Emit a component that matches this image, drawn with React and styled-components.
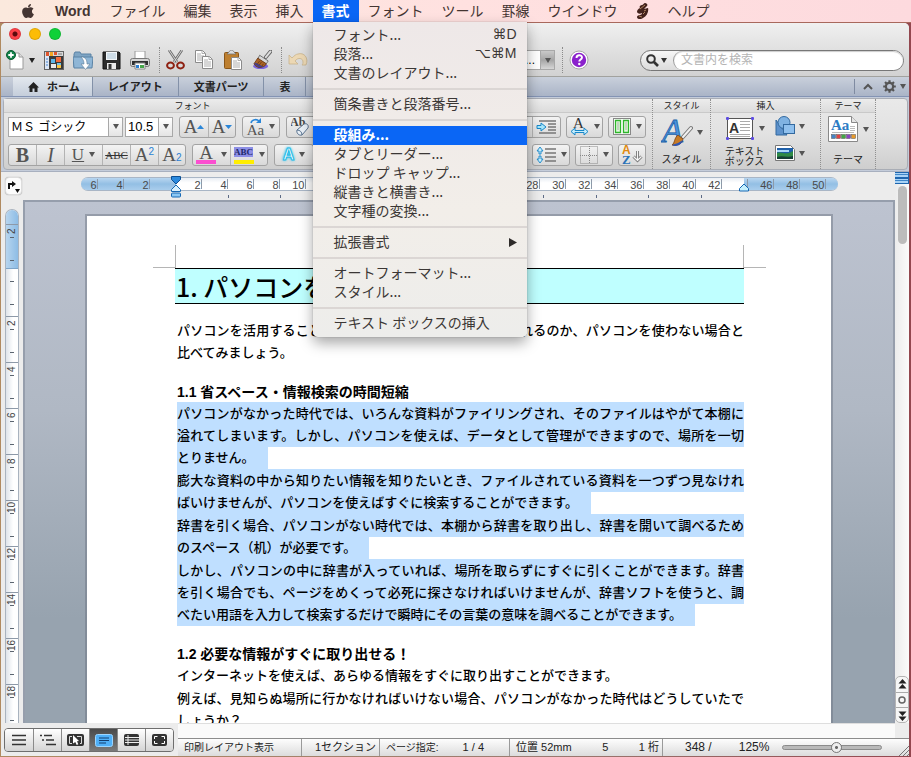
import { useState } from "react";
import styled, { createGlobalStyle, css } from "styled-components";
import { FaApple } from "react-icons/fa";

const GlobalStyle = createGlobalStyle`
  * {
    box-sizing: border-box;
  }
  body {
    margin: 0;
    font-family: "Liberation Sans", "Noto Sans CJK JP", sans-serif;
    color: #222;
  }
  button, select, input {
    font: inherit;
    color: inherit;
  }
  svg {
    display: block;
    flex: none;
  }
`;

const Desktop = styled.div`
  display: flex;
  flex-direction: column;
  height: 100vh;
  overflow: hidden;
  background: linear-gradient(90deg, #b08a60, #9a7a70 60%, #93474f);
`;

/* ---------- menu bar ---------- */
const MenuBar = styled.nav`
  display: flex;
  flex: none;
  height: 23px;
  padding-left: 11px;
  border-bottom: 1px solid #a8685c;
  background: linear-gradient(90deg, #fbe9dd, #ffe1e0 50%, #fddade);
  font-family: "Noto Sans CJK JP", sans-serif;
  font-size: 14px;
  line-height: 20px;
`;
const MenuSlot = styled.div`
  position: relative;
`;
const MenuTitle = styled.button`
  display: flex;
  align-items: ${(p) => (p.$icon ? "center" : "flex-start")};
  height: 22px;
  padding: 0 ${(p) => (p.$app ? 10 : 9)}px;
  border: none;
  white-space: nowrap;
  color: ${(p) => (p.$open ? "#fff" : "#443532")};
  background: ${(p) => (p.$open ? "#0a66f5" : "transparent")};
  font-weight: ${(p) => (p.$open || p.$app ? 700 : 400)};
  font-family: ${(p) => (p.$app ? '"Liberation Sans", sans-serif' : "inherit")};
  line-height: ${(p) => (p.$app ? 22 : 20)}px;
`;
const Dropdown = styled.div`
  position: absolute;
  z-index: 10;
  top: 22px;
  left: 0;
  width: 214px;
  padding: 4px 0;
  border-radius: 0 0 5px 5px;
  background: linear-gradient(#eee8e8, #f2eee9 60%, #ededeb);
  box-shadow: 0 6px 14px rgba(0, 0, 0, 0.35), 0 0 1px rgba(0, 0, 0, 0.5);
`;
const MenuItem = styled.button`
  display: flex;
  align-items: flex-start;
  justify-content: space-between;
  width: 100%;
  height: 19px;
  padding: 0 10px 0 21px;
  border: none;
  line-height: 17px;
  white-space: nowrap;
  color: ${(p) => (p.$active ? "#fff" : "#3b3735")};
  background: ${(p) => (p.$active ? "#0a66f5" : "transparent")};
  font-weight: ${(p) => (p.$active ? 700 : 400)};
`;
const Shortcut = styled.span`
  font-family: "Liberation Sans", "DejaVu Sans", sans-serif;
`;
const Divider = styled.hr`
  height: 2px;
  margin: 5px 0;
  border: none;
  background: #dbd6d4;
`;

/* ---------- window ---------- */
const Window = styled.div`
  display: flex;
  flex-direction: column;
  flex: 1;
  min-height: 0;
  margin: 0 2px 1px 1px;
  overflow: hidden;
  border-radius: 5px 5px 0 0;
  background: #ececec;
`;
const TitleBar = styled.header`
  flex: none;
  height: 54px;
  border-bottom: 1px solid #a2a29e;
  background: linear-gradient(#f0f0f0, #e2e2e2 45%, #d2d2d2);
`;
const Lights = styled.div`
  display: flex;
  gap: 8px;
  padding: 5px 8px 0;
`;
const Light = styled.button`
  width: 12px;
  height: 12px;
  padding: 0;
  border: 1px solid rgba(0, 0, 0, 0.12);
  border-radius: 50%;
  background: ${(p) => p.$color};
`;
const Toolbar = styled.div`
  display: flex;
  align-items: center;
  height: 36px;
  margin-top: 2px;
  padding: 0 5px 0 5px;
`;
const ToolButton = styled.button`
  display: flex;
  align-items: center;
  gap: ${(p) => (p.$gap ? "5px" : 0)};
  margin-right: 9px;
  padding: 0;
  border: none;
  background: none;
`;
const DottedLine = styled.span`
  align-self: center;
  height: 26px;
  margin-right: 6px;
  border-left: 1px dotted #8b8b8b;
`;
const ComboBox = styled.label`
  display: grid;
  width: ${(p) => p.$width}px;
  height: 20px;
  flex: none;
  select {
    grid-area: 1 / 1;
    min-width: 0;
    padding: 0 ${(p) => (p.$end ? 19 : 14)}px 0 2px;
    border: 1px solid #a8a8a8;
    border-radius: 0;
    appearance: none;
    background: #fff;
    color: #000;
    font-size: ${(p) => p.$size || 12}px;
    text-align-last: ${(p) => (p.$end ? "right" : "left")};
  }
  span {
    grid-area: 1 / 1;
    justify-self: end;
    display: flex;
    align-items: center;
    justify-content: center;
    width: 14px;
    margin: 1px;
    border-left: 1px solid #a8a8a8;
    background: ${(p) =>
      p.$end
        ? "linear-gradient(#c9c9c9, #a5a5a5 50%, #d6d6d6)"
        : "linear-gradient(#fff, #e4e4e4)"};
    pointer-events: none;
  }
`;
const SearchBox = styled.label`
  display: flex;
  align-items: center;
  flex: 0 1 264px;
  height: 21px;
  margin-left: auto;
  padding-left: 5px;
  border: 1px solid #777;
  border-radius: 11px;
  background: linear-gradient(#f6f6f6, #dcdcdc);
  gap: 2px;
  input {
    flex: 1;
    min-width: 0;
    height: 19px;
    margin-left: 4px;
    padding: 0 8px 0 7px;
    border: none;
    border-left: 1px solid #999;
    border-radius: 10px;
    outline: none;
    background: #fff;
    font-size: 12px;
    box-shadow: inset 0 1px 1px #ccc;
  }
  input::placeholder {
    color: #b4b4b4;
  }
`;

/* ---------- ribbon ---------- */
const TabBar = styled.div`
  display: flex;
  flex: none;
  height: 20px;
  padding-left: 12px;
  border-bottom: 1px solid #8494b4;
  background: linear-gradient(#c9d0db, #aab4c7);
`;
const Tab = styled.button`
  display: flex;
  align-items: center;
  justify-content: center;
  gap: 8px;
  padding: 1px ${(p) => (p.$active ? 12 : 15)}px 0 15px;
  border: none;
  border-right: 1px solid #8391a8;
  font-size: 11px;
  font-weight: 700;
  line-height: 18px;
  white-space: nowrap;
  background: ${(p) =>
    p.$active ? "linear-gradient(#e3e8ee, #c5cedb)" : "transparent"};
`;
const TabTools = styled.div`
  display: flex;
  align-items: center;
  gap: 6px;
  margin: 2px 1px 2px auto;
  padding-left: 6px;
  border-left: 1px solid #7f8ba1;
`;
const IconButton = styled.button`
  display: flex;
  align-items: center;
  gap: 4px;
  padding: 0 2px;
  border: none;
  background: none;
`;
const RibbonFrame = styled.section`
  flex: none;
  height: 75px;
  padding: 1px 1px 1px 2px;
  border-bottom: 1px solid #a8b0bf;
  background: #c4ccda;
`;
const Ribbon = styled.div`
  display: flex;
  height: 72px;
  border: 1px solid #a9adb5;
  border-radius: 4px;
  background: linear-gradient(#e9e9e9, #e2e2e2 50%, #cecece);
`;
const Group = styled.div`
  display: flex;
  flex-direction: column;
  flex: 0 0 ${(p) => p.$width}px;
  border-right: ${(p) => (p.$plain ? "none" : "1px dotted #8f8f8f")};
`;
const GroupTitle = styled.h3`
  flex: none;
  height: 14px;
  margin: 0;
  border-bottom: 1px solid #c9c9c9;
  background: linear-gradient(#ececec, #dcdcdc);
  font-size: 9px;
  font-weight: 400;
  line-height: 14px;
  text-align: center;
`;
const Rows = styled.div`
  display: flex;
  flex-direction: column;
  gap: 7px;
  padding: 3px 6px 0 4px;
`;
const Row = styled.div`
  display: flex;
  align-items: center;
  justify-content: ${(p) => (p.$end ? "flex-end" : "flex-start")};
  gap: ${(p) => (p.$end ? 5 : 6)}px;
  height: 21px;
`;
const ComboPair = styled.div`
  display: flex;
  gap: 2px;
`;
const ButtonSet = styled.div`
  display: flex;
  height: 22px;
  border: 1px solid #a3a3a3;
  border-radius: 3px;
  background: linear-gradient(#f3f3f3, #d9d9d9);
  > button + button {
    border-left: 1px solid #b3b3b3;
  }
`;
const RibbonButton = styled.button`
  display: flex;
  align-items: center;
  justify-content: center;
  gap: 5px;
  width: ${(p) => p.$width || 28}px;
  padding: 0;
  border: none;
  background: none;
  color: #555;
  font-family: "Liberation Serif", serif;
  font-size: 19px;
  line-height: 20px;
`;
const Strong = styled.b`
  font-size: 20px;
`;
const Slanted = styled.i`
  font-size: 20px;
`;
const Underlined = styled.u`
  font-size: 17px;
`;
const Strike = styled.s`
  color: #333;
  font-size: 11px;
`;
const Index = styled.span`
  align-self: ${(p) => (p.$sub ? "flex-end" : "flex-start")};
  margin-left: -5px;
  color: #2a7fd4;
  font-family: "Liberation Sans", sans-serif;
  font-size: 10px;
  line-height: ${(p) => (p.$sub ? 14 : 13)}px;
`;
const Tight = styled.span`
  display: flex;
  align-items: center;
`;
const Stack = styled.span`
  display: flex;
  flex-direction: column;
  align-items: center;
`;
const ColorBar = styled.span`
  display: flex;
  width: 20px;
  height: 19px;
  justify-content: center;
  border-bottom: 4px solid ${(p) => p.$color};
  line-height: 16px;
`;
const Marked = styled.b`
  align-self: flex-start;
  margin-top: 2px;
  background: #8d8fe6;
  color: #222a6a;
  font-size: 9px;
  line-height: 10px;
`;
const Glow = styled.b`
  color: #fff;
  font-family: "Liberation Sans", sans-serif;
  font-size: 16px;
  -webkit-text-stroke: 1px #1fb9e6;
  text-shadow: 0 0 3px #26c6ee, 0 0 3px #26c6ee;
`;
const CaseLabel = styled.span`
  font-size: 15px;
  line-height: 12px;
`;
const LargeTool = styled.button`
  display: flex;
  flex-direction: column;
  align-items: center;
  justify-content: space-between;
  height: 54px;
  padding: 3px 0 0;
  border: none;
  background: none;
  font-size: 10px;
  line-height: 10px;
`;
const Pair = styled.span`
  display: flex;
  align-items: center;
  gap: 4px;
`;
const LargeText = styled.span`
  padding-bottom: ${(p) => (p.$double ? 0 : 2)}px;
`;
const ToolRow = styled.div`
  display: flex;
  justify-content: center;
  gap: 8px;
`;
const ToolStack = styled.div`
  display: flex;
  flex-direction: column;
  gap: 9px;
  padding-top: 3px;
`;

/* ---------- work area ---------- */
const WorkArea = styled.main`
  display: grid;
  grid-template-columns: 22px minmax(0, 1fr) 14px;
  grid-template-rows: 28px minmax(0, 1fr);
  flex: 1;
  min-height: 0;
`;
const TabPicker = styled.button`
  display: flex;
  align-items: center;
  justify-content: center;
  width: 17px;
  height: 18px;
  margin: 5px 0 0 4px;
  padding: 0;
  border: 1px solid #ddd;
  border-radius: 4px;
  background: #fcfcfc;
  box-shadow: 0 0 1px #999;
`;
const RulerTrack = styled.div`
  display: flex;
  flex-direction: column;
  align-items: center;
  padding-top: 5px;
`;
const Ruler = styled.div`
  display: flex;
  height: 14px;
  border: 1px solid #a9b6c6;
  border-width: 1px 0;
  border-radius: 7px;
  font-size: 11px;
  line-height: 13px;
  color: #4a4a4a;
`;
const RulerPart = styled.div`
  position: relative;
  display: flex;
  justify-content: ${(p) => (p.$first ? "flex-end" : "flex-start")};
  width: ${(p) => p.$width}px;
  padding-right: ${(p) => (p.$first ? 26 : 0)}px;
  border-radius: ${(p) =>
    p.$first ? "7px 0 0 7px" : p.$last ? "0 7px 7px 0" : 0};
  background: ${(p) =>
    p.$first || p.$last
      ? "linear-gradient(#b9d6f0, #93bfe4 50%, #a9cdec)"
      : "linear-gradient(#e9eef4, #fff 40%, #fff)"};
`;
const RulerCell = styled.span`
  width: ${(p) => p.$width || 26}px;
  margin: 1px 0;
  border-right: 1px solid #8d99a8;
  line-height: 12px;
  text-align: right;
`;
const IndentMarks = styled.div`
  position: absolute;
  z-index: 1;
  top: -2px;
  left: -5px;
`;
const TabStops = styled.div`
  display: flex;
  align-self: center;
  width: 526px;
  height: 3px;
  margin: 4px 40px 0 0;
  span {
    flex: 1;
    border-right: 1px solid #5d6b85;
  }
`;
const SideRuler = styled.div`
  display: flex;
  flex-direction: column;
  width: 14px;
  min-height: 0;
  margin: 9px 0 0 4px;
  overflow: hidden;
  border: 1px solid #a9b3bf;
  border-bottom: none;
  border-radius: 7px 7px 0 0;
  background: linear-gradient(90deg, #dfe4ea, #fff 60%);
`;
const SideBand = styled.div`
  flex: none;
  padding-top: ${(p) => p.$top}px;
  height: ${(p) => p.$height}px;
  overflow: hidden;
  border-bottom: ${(p) => (p.$blue ? "1px solid #7ea5c9" : "none")};
  background: ${(p) =>
    p.$blue ? "linear-gradient(90deg, #b7d5ef, #8dbce5)" : "none"};
`;
const SideCell = styled.div`
  display: flex;
  flex-direction: column;
  align-items: center;
  height: 46px;
  overflow: hidden;
  border-top: ${(p) => (p.$bare ? "none" : "1px solid #8d99a8")};
  span {
    flex: none;
    height: ${(p) => (p.$bare ? 11 : 12)}px;
    writing-mode: vertical-rl;
    transform: rotate(180deg);
    text-align: center;
    font-size: 10px;
    line-height: 12px;
    color: #444;
  }
  i {
    flex: none;
    width: 4px;
    height: 1px;
    margin-bottom: 22px;
    background: #5c6570;
  }
`;
const Scroller = styled.div`
  grid-column: 3;
  grid-row: 1 / 3;
  display: flex;
  flex-direction: column;
  align-items: center;
  background: linear-gradient(90deg, #ececec, #fbfbfb);
`;
const SplitBox = styled.div`
  width: 14px;
  height: 6px;
  border: solid #1f66ae;
  border-width: 1px 1px 1px 0;
  background: linear-gradient(#a9d3f6 25%, #3f86c8 26%, #3f86c8 50%, #a9d3f6 51%);
`;
const Thumb = styled.div`
  width: 9px;
  height: 58px;
  margin-top: 2px;
  border-radius: 5px;
  background: #bcbcbc;
`;
const Browse = styled.div`
  display: flex;
  flex-direction: column;
  margin-top: auto;
  border: 1px solid #b4b4b4;
  border-radius: 5px;
  background: #f6f6f6;
  button {
    display: flex;
    align-items: center;
    justify-content: center;
    width: 12px;
    height: 15px;
    padding: 0;
    border: none;
    background: none;
  }
  button + button {
    border-top: 1px solid #aaa;
  }
`;
const Canvas = styled.div`
  display: flex;
  justify-content: center;
  min-height: 0;
  padding-top: 14px;
  overflow: hidden;
  border: solid #969eac;
  border-width: 2px 2px 0 2px;
  background: linear-gradient(#bdc3d0, #b0b8c4 40%, #97a3af 80%);
`;
const Sheet = styled.article`
  flex: 0 1 744px;
  height: 1052px;
  padding: 52px 87px 0 88px;
  background: #fff;
  box-shadow: 0 0 0 2px rgba(110, 118, 132, 0.5);
  color: #000;
  font-family: "Liberation Sans", "Noto Sans CJK JP", sans-serif;
`;
const Title = styled.h1`
  position: relative;
  height: 36px;
  margin: 0 0 16px;
  padding-left: 1px;
  border: solid #000;
  border-width: 1px 0;
  background: #bfffff;
  font-family: "Noto Sans CJK JP", sans-serif;
  font-size: 25px;
  font-weight: 500;
  line-height: 34px;
`;
const Crop = styled.span`
  position: absolute;
  top: -24px;
  width: 23px;
  height: 23px;
  border-bottom: 1px solid #b5b5b5;
  ${(p) =>
    p.$right
      ? css`
          right: -22px;
          border-left: 1px solid #b5b5b5;
        `
      : css`
          left: -22px;
          border-right: 1px solid #b5b5b5;
        `}
`;
const Heading = styled.h2`
  height: 21px;
  margin: 17px 0 0 2px;
  font-size: 14px;
  font-weight: 700;
  line-height: 21px;
`;
const Paragraph = styled.p`
  margin: 0 0 0 2px;
  padding-bottom: 1px;
  font-size: 13px;
  font-weight: 500;
  line-height: 22px;
  text-align: justify;
`;
const Selected = styled.span`
  padding: 4px 13px 4px 0;
  background: #bfdfff;
`;

/* ---------- bottom of the window ---------- */
const Footer = styled.footer`
  display: flex;
  flex: none;
  height: 33px;
`;
const ViewSwitch = styled.div`
  display: flex;
  height: 24px;
  margin: 5px 4px 4px 3px;
  overflow: hidden;
  border: 1px solid #6e6e6e;
  border-radius: 4px;
  button {
    display: flex;
    align-items: center;
    justify-content: center;
    width: 28px;
    padding: 0;
    border: none;
    background: linear-gradient(#fff, #d4d4d4);
  }
  button + button {
    border-left: 1px solid #8a8a8a;
  }
  button[aria-pressed="true"] {
    background: linear-gradient(#4a4a4a, #7a7a7a);
  }
`;
const FooterMain = styled.div`
  display: flex;
  flex-direction: column;
  flex: 1;
  min-width: 0;
`;
const BottomStrip = styled.div`
  height: 15px;
  border-top: 1px solid #dedede;
  margin-right: 14px;
  background: #fafafa;
`;
const Status = styled.div`
  display: flex;
  height: 18px;
  border-top: 1px solid #8c8c8c;
  background: linear-gradient(#fdfdfd, #dcdcdc);
  font-size: 11px;
  line-height: 17px;
  white-space: nowrap;
`;
const StatusCell = styled.div`
  display: flex;
  align-items: center;
  justify-content: space-between;
  flex: 0 0 ${(p) => p.$width}px;
  padding: 0 3px 0 6px;
  border-right: 1px solid #9a9a9a;
  small {
    font-size: 10px;
  }
`;
const PageCount = styled.span`
  padding-right: 22px;
`;
const Zoom = styled.label`
  display: flex;
  align-items: center;
  flex: 1;
  gap: 13px;
  padding-left: 22px;
  font-size: 12px;
  input {
    width: 100px;
    height: 12px;
    margin: 0;
    appearance: none;
    background: none;
  }
  input::-webkit-slider-runnable-track {
    height: 5px;
    border: 1px solid #8b8b8b;
    border-radius: 3px;
    background: #b9b9b9;
  }
  input::-webkit-slider-thumb {
    width: 11px;
    height: 11px;
    margin-top: -4px;
    appearance: none;
    border: 1px solid #777;
    border-radius: 50%;
    background: radial-gradient(circle, #666 1px, #eee 2px);
  }
`;
const ZoomValue = styled.span`
  padding-left: 14px;
`;
const Grip = styled.span`
  align-self: flex-end;
  margin-left: auto;
`;

/* ---------- icons ---------- */
const Svg = ({ w = 20, h = w, vb, children }) => (
  <svg width={w} height={h} viewBox={vb || `0 0 ${w} ${h}`} aria-hidden="true">
    {children}
  </svg>
);
const Caret = ({ w = 6, h = 5, fill = "#555" }) => (
  <Svg w={w} h={h} vb="0 0 6 5">
    <path d="M0 0h6L3 5z" fill={fill} />
  </Svg>
);
const ScriptIcon = () => (
  <Svg w={14} h={16}>
    <path
      d="M9 0c2 0 3 2 2 3L8 6l4-1c1 3-1 8-5 10-3 2-6 1-6-1 0-1 1-2 3-2 1 0 2-1 2-2-2 1-4 1-5-1 0-2 1-3 3-4-1-1 0-3 2-3 1 0 2-2 3-2z"
      fill="#43221c"
    />
    <path d="M4 6l5-4M3 13l3 1M8 8l2-1M7 11l2-2" stroke="#c99a70" strokeWidth=".8" />
  </Svg>
);
const NewDoc = () => (
  <Svg w={18} h={20}>
    <path d="M4 3h9l4 4v12H4z" fill="#fff" stroke="#9a9a9a" />
    <path d="M13 3v4h4" fill="#ddd" stroke="#9a9a9a" />
    <circle cx="5" cy="5" r="4.5" fill="#12824a" stroke="#0a5c33" />
    <path d="M5 2.3v5.4M2.3 5h5.4" stroke="#fff" strokeWidth="1.8" />
  </Svg>
);
const Gallery = () => (
  <Svg w={20} h={19}>
    <rect x=".5" y=".5" width="19" height="18" fill="#3b3b3b" stroke="#666" />
    <path d="M1 1h18v4H1z" fill="#d8d8d8" />
    <path d="M2 1h3v4H2zM10 1h3v3h-3z" fill="#e0552c" />
    <path d="M6 1h3v4H6z" fill="#f4a622" />
    <path d="M14 3h4" stroke="#777" />
    <path d="M1 5h4v13H1z" fill="#dbe6f5" />
    <path d="M2 8h2M2 11h2M2 14h2" stroke="#4a86cf" />
    <path d="M7 8h4v4H7z" fill="#5cb6ea" />
    <path d="M12 6h5v5h-5z" fill="#f06a3c" />
    <path d="M7 13h5v4H7z" fill="#e9e9e9" />
    <path d="M13 12h4v5h-4z" fill="#f7c544" />
    <path d="M13 12h4v2h-4z" fill="#6fc4e8" />
  </Svg>
);
const OpenFolder = () => (
  <Svg w={20} h={19}>
    <path d="M1 3l1-2h5l1 2h10v13H1z" fill="#7fa5c4" stroke="#5b83a5" />
    <path d="M0 6h20l-1 11H1z" fill="#8fb6d6" stroke="#5b83a5" />
    <path d="M8 6c4 0 6 2 6 7h3l-4.500 5.500L8 13h3c0-3-1-5-3-7z" fill="#fff" stroke="#5c7c98" strokeWidth=".6" />
  </Svg>
);
const Save = () => (
  <Svg w={19} h={19}>
    <path d="M1 1h16l1 1v16H1z" fill="#2b2b2b" stroke="#111" />
    <path d="M4 1h11v8H4z" fill="#f3f6f8" />
    <path d="M5 3h9M5 5h9M5 7h9" stroke="#a9c3d6" />
    <path d="M5 12h9v6H5z" fill="#e9e9e9" />
    <path d="M6.500 13h3v5h-3z" fill="#333" />
  </Svg>
);
const Print = () => (
  <Svg w={20} h={19}>
    <path d="M5 0h10v8H5z" fill="#fff" stroke="#999" />
    <rect x=".5" y="7.500" width="19" height="8" rx="2" fill="#d4d4d4" stroke="#777" />
    <path d="M2 10h16v4H2z" fill="#2f2f2f" />
    <path d="M5 12h10v6H5z" fill="#fff" stroke="#888" />
    <path d="M6 14h3v3H6z" fill="#2c7fd0" />
    <path d="M10 14h4v3h-4z" fill="#47a64a" />
  </Svg>
);
const Cut = () => (
  <Svg w={20} h={20}>
    <path d="M3 0l8 12M16 0L8 12" stroke="#6b6b6b" strokeWidth="2.600" />
    <path d="M3 0l8 12M16 0L8 12" stroke="#d9d9d9" strokeWidth="1" />
    <ellipse cx="4.500" cy="15.500" rx="3.400" ry="3" fill="none" stroke="#8f2213" strokeWidth="2" />
    <ellipse cx="14.500" cy="15.500" rx="3.400" ry="3" fill="none" stroke="#8f2213" strokeWidth="2" />
  </Svg>
);
const Sheets = ({ x, y }) => (
  <g transform={`translate(${x} ${y})`}>
    <path d="M.5.5h7l3 3v9H.5z" fill="#fff" stroke="#8b8b8b" />
    <path d="M7 .5v3h3.500M2 4h4M2 6h7M2 8h7M2 10h7" fill="none" stroke="#a5a5a5" strokeWidth=".9" />
  </g>
);
const Copy = () => (
  <Svg w={20} h={20}>
    <Sheets x={0} y={0} />
    <Sheets x={7} y={6} />
  </Svg>
);
const Paste = () => (
  <Svg w={20} h={20}>
    <rect x=".5" y="2.500" width="14" height="16" rx="1" fill="#bd7f30" stroke="#8a5619" />
    <path d="M3 4l2-2c1-2.500 4-2.500 5 0l2 2z" fill="#dcdcdc" stroke="#777" strokeWidth=".8" />
    <Sheets x={7} y={7} />
  </Svg>
);
const Brush = () => (
  <Svg w={19} h={20} vb="0 0 20 20">
    <ellipse cx="8" cy="16.500" rx="8" ry="3" fill="#5840e0" opacity=".75" />
    <path d="M18.500 1l-5 6" stroke="#666" strokeWidth="4" strokeLinecap="round" />
    <path d="M18.500 1l-5 6" stroke="#ddd" strokeWidth="2" strokeLinecap="round" />
    <path d="M7 5l9 6-2 3-9-5z" fill="#d8d8d8" stroke="#555" strokeWidth=".8" />
    <path d="M5 8l9 6c-1 3-5 4-8 4-2-1-4-2-5-4z" fill="#a86327" stroke="#64310f" strokeWidth=".8" />
    <path d="M7 11l-3 4M9 12l-3 4M11 14l-2 3" stroke="#6d370f" strokeWidth=".8" />
    <path d="M1 14l5 4 5-1-8-4z" fill="#333a9a" opacity=".8" />
  </Svg>
);
const Undo = () => (
  <Svg w={20} h={16}>
    <path d="M1 3v9h9L7 9c3-4 8-3 8 1 0 1 0 2-1 3h4c3-7-2-13-8-11-2 0-4 2-6 4z" fill="#ecd8b4" stroke="#c9b48d" strokeWidth=".8" />
  </Svg>
);
const Help = () => (
  <Svg w={20}>
    <circle cx="10" cy="10" r="9" fill="#fff" stroke="#a7a7a7" />
    <circle cx="10" cy="10" r="7.200" fill="#8b22cc" />
    <path d="M7.500 8c0-3.500 5.500-3.500 5.500-.5 0 2-2.700 2-2.700 4" fill="none" stroke="#fff" strokeWidth="1.900" />
    <circle cx="10.300" cy="14" r="1.200" fill="#fff" />
  </Svg>
);
const Loupe = () => (
  <Svg w={13}>
    <circle cx="5" cy="5" r="3.800" fill="none" stroke="#333" strokeWidth="2" />
    <path d="M8 8l4 4" stroke="#333" strokeWidth="2.600" />
  </Svg>
);
const Home = () => (
  <Svg w={11} h={10}>
    <path d="M5.500 0L11 5.500H9.500V10h-3V6.500h-2V10h-3V5.500H0z" fill="#222" />
  </Svg>
);
const Gear = () => (
  <Svg w={13} vb="-6.500 -6.500 13 13">
    <circle r="3.600" fill="none" stroke="#555" strokeWidth="2.200" />
    {[0, 45, 90, 135].map((a) => (
      <path key={a} d="M0-6.300v2.300M0 4v2.300" stroke="#555" strokeWidth="2.200" transform={`rotate(${a})`} />
    ))}
  </Svg>
);
const Eraser = () => (
  <Svg w={20} h={20}>
    <text x="-1" y="9" fontFamily="Liberation Serif" fontSize="12" fontWeight="700" fill="#444">Ab</text>
    <path d="M6 13l7-6c3-1 5 1 4 4l-6 7c-3 1-6-2-5-5z" fill="#e9f0f7" stroke="#59728e" />
    <path d="M6 13c3 0 5 2 5 5" fill="none" stroke="#59728e" />
  </Svg>
);
const RotateArrow = () => (
  <Svg w={12} h={6}>
    <path d="M1 5c1-4 6-4 8-2" fill="none" stroke="#2a86d8" strokeWidth="1.600" />
    <path d="M11 0v5H6z" fill="#2a86d8" />
  </Svg>
);
const IndentIcon = () => (
  <Svg w={22} h={18}>
    <path d="M3 3h17M12 6h8M12 9h8M12 12h8M3 15h17" stroke="#777" strokeWidth="1.300" />
    <path d="M1 7.500h4V5l5 4-5 4v-2.500H1z" fill="#a7e6fb" stroke="#1787c9" />
  </Svg>
);
const WidthIcon = () => (
  <Svg w={19} h={19}>
    <text x="3" y="11" fontFamily="Liberation Serif" fontSize="15" fill="#333">A</text>
    <path d="M1 14.500L5 11v2.500h9V11l4 3.500-4 3.500v-2.500H5V18z" fill="#c5edfc" stroke="#1787c9" />
  </Svg>
);
const ColumnsIcon = () => (
  <Svg w={18} h={17}>
    <rect x=".5" y=".5" width="17" height="16" fill="#fff" stroke="#888" />
    <path d="M2.500 2.500h5v12h-5zM10.500 2.500h5v12h-5z" fill="#e0fadb" stroke="#2fb52c" strokeWidth="1.300" />
    <path d="M4 5h2M4 7h2M4 9h2M4 11h2M12 5h2M12 7h2M12 9h2M12 11h2" stroke="#999" strokeWidth=".8" />
  </Svg>
);
const SpacingIcon = () => (
  <Svg w={20} h={18}>
    <path d="M4 1L7 5H5v3H3V5H1zM4 17L1 13h2v-3h2v3h2z" fill="#c5edfc" stroke="#1787c9" strokeWidth=".9" />
    <path d="M9 3h11M9 7h11M9 11h11M9 15h11" stroke="#777" strokeWidth="1.300" />
  </Svg>
);
const BordersIcon = () => (
  <Svg w={18} h={18}>
    <path d="M.5.5h17v17H.5zM9.500 0v18M0 9.500h18" fill="none" stroke="#888" strokeDasharray="1 1" />
  </Svg>
);
const SortIcon = () => (
  <Svg w={22} h={20}>
    <text x="1" y="9" fontFamily="Liberation Sans" fontSize="12" fontWeight="700" fill="#e08a12">A</text>
    <text x="1" y="19" fontFamily="Liberation Serif" fontSize="13" fontWeight="700" fill="#2a72b8">Z</text>
    <path d="M16.500 6v9M12.500 11.500l4 4 4-4" fill="none" stroke="#777" strokeWidth="3" />
    <path d="M16.500 6v9M12.500 11.500l4 4 4-4" fill="none" stroke="#f6f6f6" strokeWidth="1.200" />
  </Svg>
);
const StyleIcon = () => (
  <Svg w={32} h={32}>
    <text x="1" y="26" fontFamily="Liberation Serif" fontSize="34" fontStyle="italic" fill="#4a93dc" stroke="#2060a8" strokeWidth=".8">A</text>
    <path d="M30 12l-8 9" stroke="#777" strokeWidth="4" strokeLinecap="round" />
    <path d="M30 12l-8 9" stroke="#f0f0f0" strokeWidth="2" strokeLinecap="round" />
    <path d="M17 19l5 4c-1 5-5 7-11 6 3-2 2-7 6-10z" fill="#c77b27" stroke="#7a4310" strokeWidth=".8" />
    <path d="M11 29c3 2 9 1 11-5l-5 3z" fill="#2d55b5" />
  </Svg>
);
const TextBoxIcon = () => (
  <Svg w={30} h={25}>
    <rect x="2.500" y="2.500" width="25" height="20" fill="#fff" stroke="#555" />
    <text x="4" y="17" fontFamily="Liberation Sans" fontSize="14" fontWeight="700" fill="#333">A</text>
    <path d="M15 5.500h10M15 8.500h10M15 11.500h10M15 14.500h10M5 18.500h20M5 20.500h20" stroke="#aaa" />
    {[[1, 1], [26, 1], [1, 21], [26, 21]].map(([x, y]) => (
      <rect key={`${x}-${y}`} x={x} y={y} width="3" height="3" rx="1" fill="#5b4be0" />
    ))}
  </Svg>
);
const ShapesIcon = () => (
  <Svg w={20} h={20}>
    <path d="M1 4v15h11z" fill="#5d92cc" stroke="#33699f" />
    <circle cx="9" cy="6.500" r="6" fill="#7fb2e2" stroke="#33699f" />
    <rect x="8.500" y="8.500" width="11" height="9" fill="#8fc0ee" stroke="#33699f" />
  </Svg>
);
const PictureIcon = () => (
  <Svg w={20} h={16}>
    <path d="M.5.5h15l4 4v11H.5z" fill="#fff" stroke="#777" />
    <path d="M2 3h16v11H2z" fill="#1e5fa9" />
    <path d="M2 8c5-2 9 3 16-2v8H2z" fill="#2e8a45" />
    <path d="M2 5h12v2H2z" fill="#a9d7f7" />
    <path d="M2 12c5-2 10 1 16-1v3H2z" fill="#153f35" />
  </Svg>
);
const ThemeIcon = () => (
  <Svg w={31} h={26}>
    <path d="M.5.5h23l6 6v19H.5z" fill="#fff" stroke="#888" />
    <path d="M23.500.5v6h6" fill="#e5e5e5" stroke="#888" />
    <text x="3" y="14" fontFamily="Liberation Serif" fontSize="15" fontWeight="700" fill="#2c7cc4">Aa</text>
    <path d="M22 10.500h5M22 12.500h5M22 14.500h5M4 16.500h22" stroke="#bbb" />
    {["#4584c4", "#e04343", "#43a843", "#8b43c0", "#e89a2c"].map((c, i) => (
      <rect key={c} x={3.5 + i * 5} y="18.500" width="4" height="4" fill={c} stroke="#555" strokeWidth=".5" />
    ))}
  </Svg>
);
const ZeroMark = () => (
  <Svg w={10} h={22}>
    <path d="M.5.500h9v3L5 8 .5 3.500z" fill="#2c8ade" stroke="#0d4f93" />
    <path d="M5 9l4.500 4.500v2h-9v-2z" fill="#d8f0fd" stroke="#1668b4" />
    <rect x=".5" y="17" width="9" height="4" rx="1" fill="#8cc8f4" stroke="#1668b4" />
  </Svg>
);
const EndMark = () => (
  <Svg w={10} h={22}>
    <path d="M5 8l4.500 4.500v2.500h-9v-2.500z" fill="#c5f0fd" stroke="#1668b4" />
  </Svg>
);
const LinesIcon = () => (
  <Svg w={16} h={12}>
    <path d="M1 1.500h14M1 6h14M1 10.500h14" stroke="#333" strokeWidth="1.500" />
  </Svg>
);
const OutlineIcon = () => (
  <Svg w={18} h={12}>
    <path d="M1 1.500h2M5 1.500h8M3 6h2M7 6h8M7 10.500h10" stroke="#333" strokeWidth="1.500" />
  </Svg>
);
const PublishIcon = () => (
  <Svg w={17} h={12}>
    <rect width="17" height="12" rx="2" fill="#333" />
    <path d="M5 2.500H2.500v7H5M10 2.500h4.500v7H13" fill="none" stroke="#ddd" />
    <path d="M6 1l6 6-2 .3 1.300 3-1.600.7-1.400-3L6 9.500z" fill="#fff" />
  </Svg>
);
const PageIcon = () => (
  <Svg w={18} h={13}>
    <rect x=".5" y=".5" width="17" height="12" rx="2" fill="#4fb0f8" stroke="#9bd5ff" />
    <path d="M4 4h10M4 6.500h10M4 9h7" stroke="#123e70" strokeWidth="1.200" />
  </Svg>
);
const NotebookIcon = () => (
  <Svg w={16} h={12}>
    <rect width="15" height="12" rx="2" fill="#333" />
    <path d="M4 1v10M1 3.500h14M1 6h15M1 8.500h14" stroke="#eee" />
  </Svg>
);
const FullIcon = () => (
  <Svg w={15} h={12}>
    <rect width="15" height="12" rx="2" fill="#333" />
    <path d="M2.500 5V2.500h3M9.500 2.500h3V5M12.500 7v2.500h-3M5.500 9.500h-3V7" fill="none" stroke="#fff" />
  </Svg>
);
const DoubleArrow = ({ down }) => (
  <Svg w={9} h={11}>
    <path
      d="M4.500 0L8.500 4.500H.5zM4.500 5L8.500 9.500H.5z"
      fill="#222"
      transform={down ? "rotate(180 4.500 5.500)" : undefined}
    />
  </Svg>
);
const SubmenuArrow = () => (
  <Svg w={9} h={17}>
    <path d="M1 5v9l8-4.500z" fill="#2e2b2a" />
  </Svg>
);

/* ---------- data ---------- */
const MENU = [
  [
    ["フォント...", "⌘D"],
    ["段落...", "⌥⌘M"],
    ["文書のレイアウト..."]
  ],
  [["箇条書きと段落番号..."]],
  [
    ["段組み..."],
    ["タブとリーダー..."],
    ["ドロップ キャップ..."],
    ["縦書きと横書き..."],
    ["文字種の変換..."]
  ],
  [["拡張書式", <SubmenuArrow key="more" />]],
  [["オートフォーマット..."], ["スタイル..."]],
  [["テキスト ボックスの挿入"]]
];
const SELECTED_TEXT = [
  "パソコンがなかった時代では、いろんな資料がファイリングされ、そのファイルはやがて本棚に溢れてしまいます。しかし、パソコンを使えば、データとして管理ができますので、場所を一切とりません。",
  "膨大な資料の中から知りたい情報を知りたいとき、ファイルされている資料を一つずつ見なければいけませんが、パソコンを使えばすぐに検索することができます。",
  "辞書を引く場合、パソコンがない時代では、本棚から辞書を取り出し、辞書を開いて調べるためのスペース（机）が必要です。",
  "しかし、パソコンの中に辞書が入っていれば、場所を取らずにすぐに引くことができます。辞書を引く場合でも、ページをめくって必死に探さなければいけませんが、辞書ソフトを使うと、調べたい用語を入力して検索するだけで瞬時にその言葉の意味を調べることができます。"
];
const TOOLS = [
  ["開く", OpenFolder],
  ["保存", Save],
  ["印刷", Print]
];
const EDIT_TOOLS = [
  ["切り取り", Cut],
  ["コピー", Copy],
  ["貼り付け", Paste],
  ["書式のコピー", Brush]
];
const VIEWS = [
  ["下書き", LinesIcon],
  ["アウトライン", OutlineIcon],
  ["出版レイアウト", PublishIcon],
  ["印刷レイアウト", PageIcon],
  ["ノート", NotebookIcon],
  ["全画面", FullIcon]
];
const evens = (from, to) =>
  Array.from({ length: (to - from) / 2 + 1 }, (_, i) => from + i * 2);

const FormatMenu = () => (
  <Dropdown role="menu">
    {MENU.map((section, i) => (
      <div key={section[0][0]}>
        {i > 0 && <Divider />}
        {section.map(([label, key]) => (
          <MenuItem key={label} role="menuitem" $active={label === "段組み..."}>
            {label}
            {key && <Shortcut>{key}</Shortcut>}
          </MenuItem>
        ))}
      </div>
    ))}
  </Dropdown>
);

const Combo = ({ label, value, ...rest }) => (
  <ComboBox {...rest}>
    <select aria-label={label}>
      <option>{value}</option>
    </select>
    <span>
      <Caret />
    </span>
  </ComboBox>
);

const FontGroup = () => (
  <Group $width={377} $plain>
    <GroupTitle>フォント</GroupTitle>
    <Rows>
      <Row>
        <ComboPair>
          <Combo label="フォント名" value="ＭＳ ゴシック" $width={115} />
          <Combo label="サイズ" value="10.5" $width={48} $size={13} />
        </ComboPair>
        <ButtonSet>
          <RibbonButton aria-label="拡大">
            <Tight>
              A<Svg w={7} h={4}><path d="M0 4h7L3.500 0z" fill="#2a86d8" /></Svg>
            </Tight>
          </RibbonButton>
          <RibbonButton $width={27} aria-label="縮小">
            <Tight>
              A<Svg w={7} h={4}><path d="M0 0h7L3.500 4z" fill="#2a86d8" /></Svg>
            </Tight>
          </RibbonButton>
        </ButtonSet>
        <ButtonSet>
          <RibbonButton $width={36} aria-label="文字種">
            <Stack>
              <RotateArrow />
              <CaseLabel>Aa</CaseLabel>
            </Stack>
            <Caret />
          </RibbonButton>
        </ButtonSet>
        <ButtonSet>
          <RibbonButton aria-label="書式のクリア">
            <Eraser />
          </RibbonButton>
        </ButtonSet>
      </Row>
      <Row>
        <ButtonSet>
          <RibbonButton $width={27}><Strong>B</Strong></RibbonButton>
          <RibbonButton><Slanted>I</Slanted></RibbonButton>
          <RibbonButton $width={38}>
            <Underlined>U</Underlined>
            <Caret />
          </RibbonButton>
          <RibbonButton><Strike>ABC</Strike></RibbonButton>
          <RibbonButton>A<Index>2</Index></RibbonButton>
          <RibbonButton $width={27}>A<Index $sub>2</Index></RibbonButton>
        </ButtonSet>
        <ButtonSet>
          <RibbonButton $width={37} aria-label="文字の色">
            <ColorBar $color="#fb4fd0">A</ColorBar>
            <Caret />
          </RibbonButton>
          <RibbonButton $width={37} aria-label="蛍光ペン">
            <ColorBar $color="#ffee00">
              <Marked>ABC</Marked>
            </ColorBar>
            <Caret />
          </RibbonButton>
        </ButtonSet>
        <ButtonSet>
          <RibbonButton $width={38} aria-label="文字の効果">
            <Glow>A</Glow>
            <Caret />
          </RibbonButton>
        </ButtonSet>
      </Row>
    </Rows>
  </Group>
);

const ParagraphGroup = () => (
  <Group $width={272}>
    <GroupTitle>段落</GroupTitle>
    <Rows>
      <Row $end>
        <ButtonSet>
          <RibbonButton aria-label="インデント解除"><IndentIcon /></RibbonButton>
          <RibbonButton aria-label="インデント"><IndentIcon /></RibbonButton>
        </ButtonSet>
        <ButtonSet>
          <RibbonButton $width={35} aria-label="文字幅"><WidthIcon /><Caret /></RibbonButton>
        </ButtonSet>
        <ButtonSet>
          <RibbonButton $width={36} aria-label="段組み"><ColumnsIcon /><Caret /></RibbonButton>
        </ButtonSet>
      </Row>
      <Row $end>
        <ButtonSet>
          <RibbonButton $width={36} aria-label="均等割り付け"><LinesIcon /></RibbonButton>
        </ButtonSet>
        <ButtonSet>
          <RibbonButton $width={36} aria-label="行間"><SpacingIcon /><Caret /></RibbonButton>
        </ButtonSet>
        <ButtonSet>
          <RibbonButton $width={36} aria-label="罫線"><BordersIcon /><Caret /></RibbonButton>
        </ButtonSet>
        <ButtonSet>
          <RibbonButton $width={26} aria-label="並べ替え"><SortIcon /></RibbonButton>
        </ButtonSet>
      </Row>
    </Rows>
  </Group>
);

const InsertGroups = () => (
  <>
    <Group $width={58}>
      <GroupTitle>スタイル</GroupTitle>
      <ToolRow>
        <LargeTool>
          <Pair><StyleIcon /><Caret /></Pair>
          <LargeText>スタイル</LargeText>
        </LargeTool>
      </ToolRow>
    </Group>
    <Group $width={110}>
      <GroupTitle>挿入</GroupTitle>
      <ToolRow>
        <LargeTool>
          <Pair><TextBoxIcon /><Caret /></Pair>
          <LargeText $double>テキスト<br />ボックス</LargeText>
        </LargeTool>
        <ToolStack>
          <IconButton aria-label="図形"><ShapesIcon /><Caret /></IconButton>
          <IconButton aria-label="画像"><PictureIcon /><Caret /></IconButton>
        </ToolStack>
      </ToolRow>
    </Group>
    <Group $width={55}>
      <GroupTitle>テーマ</GroupTitle>
      <ToolRow>
        <LargeTool>
          <Pair><ThemeIcon /><Caret /></Pair>
          <LargeText>テーマ</LargeText>
        </LargeTool>
      </ToolRow>
    </Group>
  </>
);

const HorizontalRuler = () => (
  <RulerTrack>
    <Ruler>
      <RulerPart $first $width={95}>
        <RulerCell $width={17}>6</RulerCell>
        <RulerCell>4</RulerCell>
        <RulerCell>2</RulerCell>
      </RulerPart>
      <RulerPart $width={568}>
        <IndentMarks><ZeroMark /></IndentMarks>
        {evens(2, 42).map((n) => (
          <RulerCell key={n}>{n}</RulerCell>
        ))}
      </RulerPart>
      <RulerPart $last $width={94}>
        <IndentMarks><EndMark /></IndentMarks>
        <RulerCell $width={4} />
        {[46, 48, 50].map((n) => (
          <RulerCell key={n}>{n}</RulerCell>
        ))}
      </RulerPart>
    </Ruler>
    <TabStops>
      {evens(2, 20).map((n) => (
        <span key={n} />
      ))}
    </TabStops>
  </RulerTrack>
);

const VerticalRuler = () => (
  <SideRuler>
    <SideBand $blue $top={14} $height={59}>
      <SideCell><span>2</span><i /><i /></SideCell>
    </SideBand>
    <SideBand $top={1} $height={47}>
      <SideCell $bare><span /><i /><i /></SideCell>
    </SideBand>
    {evens(2, 18).map((n) => (
      <SideBand key={n} $top={0} $height={46}>
        <SideCell><span>{n}</span><i /><i /></SideCell>
      </SideBand>
    ))}
  </SideRuler>
);

const Document = () => (
  <Canvas>
    <Sheet>
      <Title>
        <Crop />
        <Crop $right />
        1. パソコンを活用する
      </Title>
      <Paragraph>
        パソコンを活用することによりどのようなメリットが得られるのか、パソコンを使わない場合と比べてみましょう。
      </Paragraph>
      <Heading>1.1 省スペース・情報検索の時間短縮</Heading>
      {SELECTED_TEXT.map((text) => (
        <Paragraph key={text}>
          <Selected>{text}</Selected>
        </Paragraph>
      ))}
      <Heading>1.2 必要な情報がすぐに取り出せる！</Heading>
      <Paragraph>インターネットを使えば、あらゆる情報をすぐに取り出すことができます。</Paragraph>
      <Paragraph>
        例えば、見知らぬ場所に行かなければいけない場合、パソコンがなかった時代はどうしていたでしょうか？
      </Paragraph>
    </Sheet>
  </Canvas>
);

const App = () => {
  const [view, setView] = useState("印刷レイアウト");
  const [zoom, setZoom] = useState(125);

  return (
    <Desktop>
      <GlobalStyle />
      <MenuBar>
        <MenuTitle $icon aria-label="アップル"><FaApple size={16} /></MenuTitle>
        <MenuTitle $app>Word</MenuTitle>
        {["ファイル", "編集", "表示", "挿入"].map((name) => (
          <MenuTitle key={name}>{name}</MenuTitle>
        ))}
        <MenuSlot>
          <MenuTitle $open>書式</MenuTitle>
          <FormatMenu />
        </MenuSlot>
        {["フォント", "ツール", "罫線", "ウインドウ"].map((name) => (
          <MenuTitle key={name}>{name}</MenuTitle>
        ))}
        <MenuTitle $icon aria-label="スクリプト"><ScriptIcon /></MenuTitle>
        <MenuTitle>ヘルプ</MenuTitle>
      </MenuBar>

      <Window>
        <TitleBar>
          <Lights>
            <Light
              aria-label="閉じる"
              $color="radial-gradient(circle, #5c0a0d 2px, #fc4148 3px)"
            />
            <Light aria-label="しまう" $color="#fdbc05" />
            <Light aria-label="拡大" $color="#0fd138" />
          </Lights>
          <Toolbar>
            <ToolButton $gap aria-label="新規">
              <NewDoc />
              <Caret fill="#222" />
            </ToolButton>
            <ToolButton aria-label="ギャラリー"><Gallery /></ToolButton>
            {TOOLS.map(([name, Icon]) => (
              <ToolButton key={name} aria-label={name}><Icon /></ToolButton>
            ))}
            <DottedLine />
            {EDIT_TOOLS.map(([name, Icon]) => (
              <ToolButton key={name} aria-label={name}><Icon /></ToolButton>
            ))}
            <DottedLine />
            <ToolButton aria-label="元に戻す"><Undo /></ToolButton>
            <Combo label="表示倍率" value="..." $width={238} $end />
            <Spacer />
            <DottedLine />
            <ToolButton aria-label="ヘルプ"><Help /></ToolButton>
            <SearchBox>
              <Loupe />
              <Caret fill="#333" />
              <input type="search" placeholder="文書内を検索" aria-label="文書内を検索" />
            </SearchBox>
          </Toolbar>
        </TitleBar>

        <TabBar>
          <Tab $active><Home />ホーム</Tab>
          <Tab>レイアウト</Tab>
          <Tab>文書パーツ</Tab>
          <Tab>表</Tab>
          <TabTools>
            <IconButton aria-label="リボンを閉じる">
              <Svg w={10} h={7}>
                <path d="M1 6l4-4 4 4" fill="none" stroke="#555" strokeWidth="2" />
              </Svg>
            </IconButton>
            <IconButton aria-label="設定"><Gear /><Caret /></IconButton>
          </TabTools>
        </TabBar>

        <RibbonFrame>
          <Ribbon>
            <FontGroup />
            <ParagraphGroup />
            <InsertGroups />
          </Ribbon>
        </RibbonFrame>

        <WorkArea>
          <TabPicker aria-label="タブの種類">
            <Svg w={13} h={13}>
              <path d="M2 9V4h4" fill="none" stroke="#111" strokeWidth="2" />
              <path d="M5 1l4 3-4 3zM8 9h5l-2.500 4z" fill="#111" />
            </Svg>
          </TabPicker>
          <HorizontalRuler />
          <Scroller>
            <SplitBox />
            <SplitBox />
            <Thumb />
            <Browse>
              <button aria-label="前へ"><DoubleArrow /></button>
              <button aria-label="対象">
                <Svg w={8}><circle cx="4" cy="4" r="3" fill="none" stroke="#666" strokeWidth="1.500" /></Svg>
              </button>
              <button aria-label="次へ"><DoubleArrow down /></button>
            </Browse>
          </Scroller>
          <VerticalRuler />
          <Document />
        </WorkArea>

        <Footer>
          <ViewSwitch>
            {VIEWS.map(([name, Icon]) => (
              <button
                key={name}
                aria-label={name}
                aria-pressed={view === name}
                onClick={() => setView(name)}
              >
                <Icon />
              </button>
            ))}
          </ViewSwitch>
          <FooterMain>
            <BottomStrip />
            <Status>
              <StatusCell $width={124}><small>印刷レイアウト表示</small></StatusCell>
              <StatusCell $width={78}><span />1セクション</StatusCell>
              <StatusCell $width={130}>
                <small>ページ指定:</small>
                <PageCount>1 / 4</PageCount>
              </StatusCell>
              <StatusCell $width={153}>
                <span>位置 52mm</span>
                <span>5</span>
                <span>1 桁</span>
              </StatusCell>
              <Zoom>
                <span>348 /</span>
                <ZoomValue>{zoom}%</ZoomValue>
                <input
                  type="range"
                  aria-label="ズーム"
                  min="10"
                  max="220"
                  value={zoom}
                  onChange={(e) => setZoom(e.target.value)}
                />
                <Grip>
                  <Svg w={11} h={11}>
                    <path d="M1 11L11 1M5 11l6-6M9 11l2-2" stroke="#777" />
                  </Svg>
                </Grip>
              </Zoom>
            </Status>
          </FooterMain>
        </Footer>
      </Window>
    </Desktop>
  );
};
const Spacer = styled.span`
  width: 7px;
`;

export default App;
